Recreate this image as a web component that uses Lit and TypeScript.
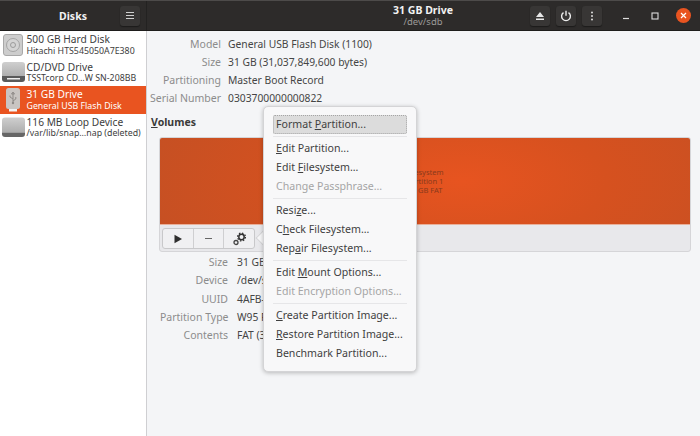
import { LitElement, html, css, svg } from "lit";
import { customElement } from "lit/decorators.js";

const u = (before: string, ch: string, after: string) => html`${before}<u>${ch}</u>${after}`;

const diskIcon = svg`<svg width="20" height="22" viewBox="0 0 20 22"><rect x=".5" y=".5" width="19" height="21" rx="2.500" fill="#cdcdcd" stroke="#a8a8a8"/><circle cx="10" cy="11" r="6.500" fill="#d4d4d4" stroke="#a5a5a5"/><circle cx="10" cy="11" r="2.500" fill="none" stroke="#9c9c9c"/></svg>`;
const cdIcon = svg`<svg width="23" height="22" viewBox="0 0 23 22"><defs><linearGradient id="g1" x1="0" y1="0" x2="0" y2="1"><stop offset="0" stop-color="#cfcfcf"/><stop offset="1" stop-color="#adadad"/></linearGradient></defs><path d="M0 4a3 3 0 0 1 3-3h17a3 3 0 0 1 3 3v12H0z" fill="url(#g1)"/><path d="M0 15h23v3a3 3 0 0 1-3 3H3a3 3 0 0 1-3-3z" fill="#5a5a5a"/><path d="M5 17h13v1.500H5z" fill="#eee"/></svg>`;
const usbIcon = svg`<svg width="20" height="26" viewBox="0 0 20 26"><path d="M6 21h8v3.500h-8z" fill="#f3f3f3"/><rect x="3" y="1" width="14" height="21" rx="2.500" fill="#c9c5c2"/><path d="M10 6v10M10 5l-1.500 2h3zM10 12l-3-2V8.500M10 14l2.800-2v-2" stroke="#8f8b88" stroke-width="1" fill="none"/><circle cx="10" cy="16" r="1.200" fill="#8f8b88"/></svg>`;
const loopIcon = svg`<svg width="23" height="21" viewBox="0 0 23 21"><defs><linearGradient id="g2" x1="0" y1="0" x2="0" y2="1"><stop offset="0" stop-color="#cfcfcf"/><stop offset="1" stop-color="#adadad"/></linearGradient></defs><path d="M0 3.500a3 3 0 0 1 3-3h17a3 3 0 0 1 3 3v12H0z" fill="url(#g2)"/><path d="M0 15.500h23v1.500a3 3 0 0 1-3 3H3a3 3 0 0 1-3-3z" fill="#666"/></svg>`;

const disks = [
  { icon: diskIcon, name: "500 GB Hard Disk", sub: "Hitachi HTS545050A7E380", sel: false },
  { icon: cdIcon, name: "CD/DVD Drive", sub: "TSSTcorp CD…W SN-208BB", sel: false },
  { icon: usbIcon, name: "31 GB Drive", sub: "General USB Flash Disk", sel: true },
  { icon: loopIcon, name: "116 MB Loop Device", sub: "/var/lib/snap…nap (deleted)", sel: false },
];

@customElement("app-root")
export class AppRoot extends LitElement {
  static styles = css`
    :host { display: block; width: 700px; height: 436px; font-family: "Noto Sans", "Open Sans", sans-serif; font-size: 11px; color: #3d3d3d; overflow: hidden; position: relative; background: #f4f5f7; }
    u { text-underline-offset: 1px; text-decoration-thickness: 1px; }
    .header { display: flex; height: 31px; background: #2d2b2a; color: #f2f2f2; border-top: 1px solid #4d4b4a; border-bottom: 1px solid #1e1d1c; box-sizing: border-box; }
    .head-left { width: 147px; flex: none; display: flex; align-items: center; position: relative; box-sizing: border-box; padding-left: 120px; border-right: 1px solid #232221; }
    .head-left .title { position: absolute; left: 0; width: 146px; text-align: center; font-weight: 700; font-size: 10.5px; }
    .hbtn { width: 20px; height: 20px; background: #383635; border-radius: 3px; display: flex; align-items: center; justify-content: center; box-shadow: 0 1px 1px #1c1b1a; position: relative; }
    .head-right { flex: 1; display: flex; align-items: center; position: relative; }
    .titles { position: absolute; left: 0; width: 552px; text-align: center; line-height: 12px; }
    .titles b { display: block; font-size: 10.5px; font-weight: 700; }
    .titles span { display: block; font-size: 9.5px; color: #9c9a98; }
    .tools { margin-left: 383px; display: flex; gap: 6px; }
    .wm { margin-left: 16px; display: flex; align-items: center; gap: 14px; }
    .wmb { width: 15px; height: 15px; display: flex; align-items: center; justify-content: center; }
    .close { background: #e95420; border-radius: 50%; }
    .body { display: flex; height: 405px; }
    .side { width: 147px; flex: none; background: #fff; border-right: 1px solid #cfcfd2; box-sizing: border-box; padding-top: 0; }
    .row { height: 27.5px; display: flex; align-items: center; box-sizing: border-box; }
    .row.sel { background: #e95420; color: #fff; }
    .row .ic { width: 26.500px; flex: none; display: flex; justify-content: center; box-sizing: border-box; }
    .row .nm { font-size: 10.2px; line-height: 12.500px; white-space: nowrap; color: inherit; }
    .row .sb { font-size: 8.8px; line-height: 11px; white-space: nowrap; }
    .main { flex: 1; padding: 4px 0 0 3px; box-sizing: border-box; min-width: 0; }
    .kv { display: grid; grid-template-columns: 71px auto; column-gap: 7px; justify-content: start; }
    .kv .k { text-align: right; color: #8c8c8c; font-size: 10.5px; line-height: 18.100px; white-space: nowrap; }
    .kv .v { font-size: 10.3px; line-height: 18.100px; color: #454545; white-space: nowrap; }
    .vol { font-weight: 700; font-size: 10.5px; margin: 8px 0 0 1px; line-height: 14px; color: #3a3a3a; }
    .volbox { margin: 8px 9px 0 9px; height: 115px; border: 1px solid #d5d5d8; border-radius: 3px; background: #e8e8eb; overflow: hidden; display: flex; flex-direction: column; box-sizing: border-box; }
    .bar { height: 87px; flex: none; background: radial-gradient(ellipse 320px 140px at 57% 50%, #e75420 0%, #d6511f 45%, #c65023 100%); border-bottom: 1px solid #e9b09a; display: flex; justify-content: center; align-items: center; box-sizing: border-box; }
    .bar div { text-align: center; font-size: 7.5px; line-height: 8.700px; color: #8a3a1c; }
    .btns { display: flex; height: 21px; margin: 3px 0 0 2px; width: 93px; border: 1px solid #c8c8ca; border-radius: 3px; background: #f0f0f2; box-sizing: border-box; }
    .btns > div { flex: 1; display: flex; align-items: center; justify-content: center; border-right: 1px solid #cfcfd1; }
    .btns > div:last-child { border-right: 0; }
    .kv2 { margin-top: 1px; margin-left: 10px; grid-template-columns: 68px auto; column-gap: 9px; }
    .menu { position: absolute; left: 263px; top: 106px; width: 154px; height: 266px; background: #f8f8f9; border: 1px solid #d4d4d6; border-radius: 5px; box-shadow: 0 1px 4px rgba(0,0,0,.25); box-sizing: border-box; padding: 8px 9px 0 9px; font-size: 10.6px; color: #3f3f3f; }
    .arrow { position: absolute; left: 258px; top: 232px; width: 12px; height: 12px; background: #f8f8f9; transform: rotate(45deg); border-left: 1px solid #d4d4d6; border-bottom: 1px solid #d4d4d6; box-sizing: border-box; }
    .it { height: 19px; line-height: 19px; padding-left: 3px; white-space: nowrap; }
    .it.hl { background: #dcdcdc; outline: 1px dotted #a5a5a5; outline-offset: -1px; border-radius: 2px; }
    .it.dis { color: #a5a5a5; }
    .sep { height: 1px; background: #e6e6e8; margin: 2px 0; }
  `;

  render() {
    return html`
      <div class="header">
        <div class="head-left">
          <div class="title">Disks</div>
          <div class="hbtn"><svg width="10" height="9" viewBox="0 0 10 9"><path d="M1 1.500h8M1 4.500h8M1 7.500h8" stroke="#d0d0d0" stroke-width="1"/></svg></div>
        </div>
        <div class="head-right">
          <div class="titles"><b>31 GB Drive</b><span>/dev/sdb</span></div>
          <div class="tools">
            <div class="hbtn"><svg width="10" height="10" viewBox="0 0 10 10"><path d="M5 1l4 5H1zM1 7.500h8V9H1z" fill="#e8e8e8"/></svg></div>
            <div class="hbtn"><svg width="12" height="12" viewBox="0 0 12 12"><path d="M6 .8v5" stroke="#eee" stroke-width="1.400" fill="none"/><path d="M3.500 2.600a4.400 4.400 0 1 0 5 0" stroke="#eee" stroke-width="1.400" fill="none"/></svg></div>
            <div class="hbtn"><svg width="4" height="12" viewBox="0 0 4 12"><circle cx="2" cy="2.500" r="1" fill="#ddd"/><circle cx="2" cy="6" r="1" fill="#ddd"/><circle cx="2" cy="9.500" r="1" fill="#ddd"/></svg></div>
          </div>
          <div class="wm">
            <div class="wmb"><svg width="8" height="8" viewBox="0 0 8 8"><path d="M1 6.500h6" stroke="#ddd" stroke-width="1.200"/></svg></div>
            <div class="wmb"><svg width="8" height="8" viewBox="0 0 8 8"><rect x="1" y="1" width="6" height="6" fill="none" stroke="#ddd" stroke-width="1.100"/></svg></div>
            <div class="wmb close"><svg width="7" height="7" viewBox="0 0 7 7"><path d="M1 1l5 5M6 1l-5 5" stroke="#fff" stroke-width="1.200"/></svg></div>
          </div>
        </div>
      </div>
      <div class="body">
        <div class="side">
          ${disks.map((d) => html`<div class="row ${d.sel ? "sel" : ""}"><div class="ic">${d.icon}</div><div><div class="nm">${d.name}</div><div class="sb">${d.sub}</div></div></div>`)}
        </div>
        <div class="main">
          <div class="kv">
            <div class="k">Model</div><div class="v">General USB Flash Disk (1100)</div>
            <div class="k">Size</div><div class="v">31 GB (31,037,849,600 bytes)</div>
            <div class="k">Partitioning</div><div class="v">Master Boot Record</div>
            <div class="k">Serial Number</div><div class="v">0303700000000822</div>
          </div>
          <div class="vol"><u>V</u>olumes</div>
          <div class="volbox">
            <div class="bar"><div>Filesystem<br />Partition 1<br />31 GB FAT</div></div>
            <div class="btns">
              <div><svg width="10" height="10" viewBox="0 0 10 10"><path d="M1.500 .8l7.500 4.200-7.500 4.200z" fill="#2e2e2e"/></svg></div>
              <div><svg width="9" height="3" viewBox="0 0 9 3"><path d="M1 1.500h7" stroke="#666" stroke-width="1.200"/></svg></div>
              <div><svg width="15" height="14" viewBox="0 0 15 14"><circle cx="9.500" cy="5" r="3.900" fill="none" stroke="#333" stroke-width="1.300" stroke-dasharray="1.500 1.560"/><circle cx="9.500" cy="5" r="2.700" fill="none" stroke="#333" stroke-width="1.500"/><circle cx="4" cy="10.500" r="2" fill="none" stroke="#444" stroke-width="1.300"/></svg></div>
            </div>
          </div>
          <div class="kv kv2">
            <div class="k">Size</div><div class="v">31 GB — 31 GB free (0.0% full)</div>
            <div class="k">Device</div><div class="v">/dev/sdb1</div>
            <div class="k">UUID</div><div class="v">4AFB-0E21</div>
            <div class="k">Partition Type</div><div class="v">W95 FAT32</div>
            <div class="k">Contents</div><div class="v">FAT (32-bit version)</div>
          </div>
        </div>
      </div>
      <div class="arrow"></div>
      <div class="menu">
        <div class="it hl">${u("Format ", "P", "artition...")}</div>
        <div class="sep"></div>
        <div class="it">${u("", "E", "dit Partition...")}</div>
        <div class="it">${u("Edit ", "F", "ilesystem...")}</div>
        <div class="it dis">Change Passphrase...</div>
        <div class="sep"></div>
        <div class="it">${u("Resi", "z", "e...")}</div>
        <div class="it">${u("C", "h", "eck Filesystem...")}</div>
        <div class="it">${u("Rep", "a", "ir Filesystem...")}</div>
        <div class="sep"></div>
        <div class="it">${u("Edit ", "M", "ount Options...")}</div>
        <div class="it dis">Edit Encryption Options...</div>
        <div class="sep"></div>
        <div class="it">${u("", "C", "reate Partition Image...")}</div>
        <div class="it">${u("", "R", "estore Partition Image...")}</div>
        <div class="it">Benchmark Partition...</div>
      </div>
    `;
  }
}
